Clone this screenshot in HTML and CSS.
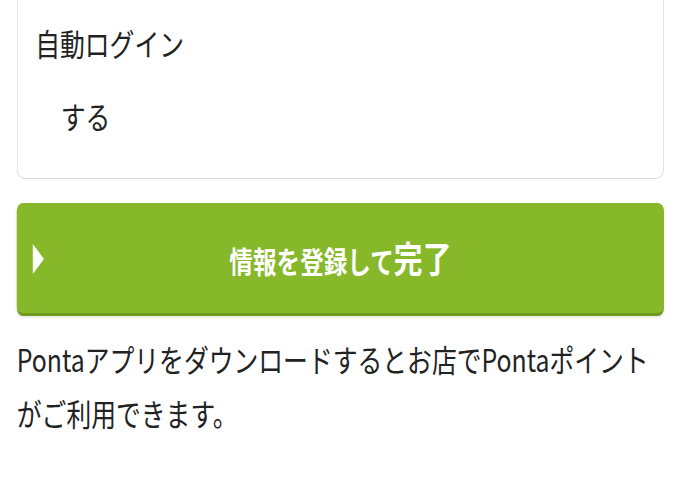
FILE: index.html
```html
<!DOCTYPE html>
<html lang="ja">
<head>
<meta charset="utf-8">
<title>自動ログイン</title>
<link rel="stylesheet" href="styles.css">
</head>
<body>
<div class="viewport">
  <div class="page">
    <section class="card">
      <div class="label">自動ログイン</div>
      <div class="value">する</div>
    </section>
    <button class="submit" type="button">
      <span class="arrow"></span>
      <span class="submit-text">情報を登録して<span class="big">完了</span></span>
    </button>
    <p class="note">Pontaアプリをダウンロードするとお店でPontaポイントがご利用できます。</p>
  </div>
</div>
</body>
</html>
```
FILE: styles.css
```css
html, body {
  margin: 0;
  padding: 0;
  background: #ffffff;
  overflow: hidden;
}
body {
  font-family: "Noto Sans CJK JP", "Noto Sans", sans-serif;
  color: #222222;
}
.viewport {
  width: 680px;
  height: 480px;
  overflow: hidden;
}
.page {
  width: 850px;
  transform: scaleX(0.8);
  transform-origin: left top;
  padding: 0 20px 0 21px;
  box-sizing: border-box;
}
.card {
  border: 1px solid #dcdcdc;
  border-top: none;
  border-radius: 0 0 10px 10px;
  padding: 22px 22px 42px;
  background: #fff;
}
.label {
  font-size: 31px;
  line-height: 41px;
}
.value {
  font-size: 31px;
  line-height: 41px;
  margin-top: 32px;
  padding-left: 32px;
}
.submit {
  margin-top: 24px;
  width: 100%;
  height: 113px;
  display: flex;
  align-items: center;
  justify-content: center;
  position: relative;
  background: #86b82a;
  border: none;
  border-bottom: 3px solid #6b9a1d;
  border-radius: 8px;
  box-shadow: 0 2px 2px rgba(0, 0, 0, 0.08);
  color: #ffffff;
  font-family: "Noto Sans CJK JP", "Noto Sans", sans-serif;
  padding: 0;
  cursor: pointer;
}
.arrow {
  position: absolute;
  left: 20px;
  top: 41px;
  width: 0;
  height: 0;
  border-top: 15px solid transparent;
  border-bottom: 15px solid transparent;
  border-left: 14px solid #ffffff;
}
.submit-text {
  font-size: 29.5px;
  font-weight: 700;
  line-height: 40px;
}
.big {
  font-size: 36px;
}
.note {
  margin: 16px 0 0 0;
  font-size: 31px;
  line-height: 54px;
  color: #222222;
}
```
